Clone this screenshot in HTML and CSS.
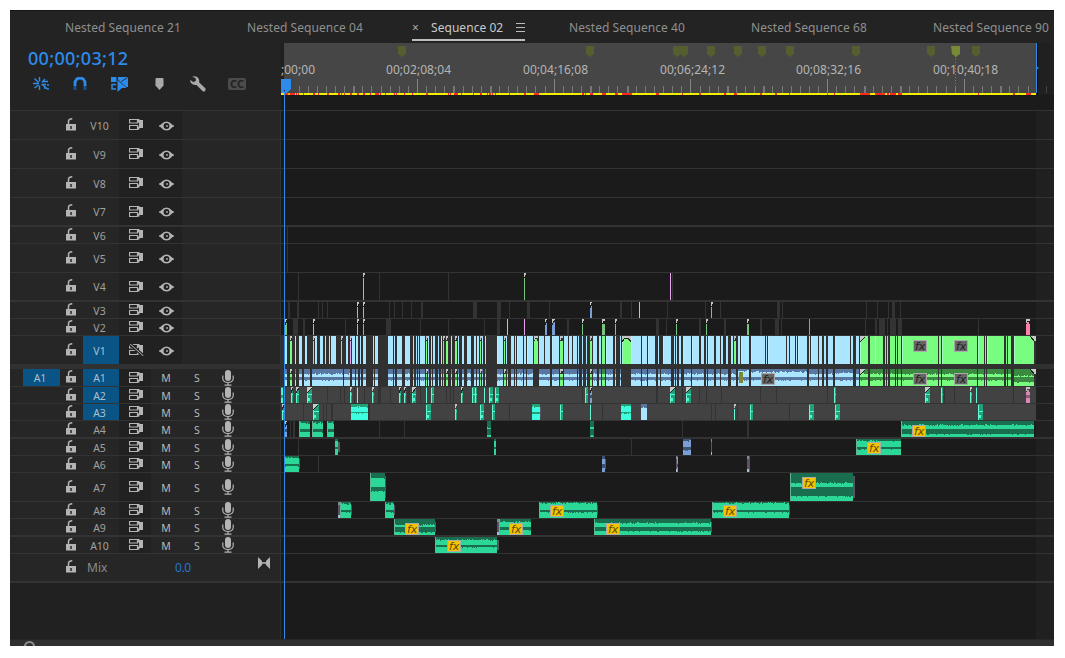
FILE: index.html
```html
<!DOCTYPE html>
<html lang="en">
<head>
<meta charset="utf-8">
<title>Timeline</title>
<link rel="stylesheet" href="styles.css">
</head>
<body>
<svg class="defs" width="0" height="0">
  <symbol id="i-lock" viewBox="0 0 10 13"><path d="M0 6h10v6.500H0z"/><path d="M2.500 6V3.500Q2.500 1 6.300 .8" fill="none" stroke="currentColor" stroke-width="1.500"/><path d="M4.300 8h1.500v3H4.300z" fill="#262626"/></symbol>
  <symbol id="i-sync" viewBox="0 0 15 12"><path d="M.5 .5h8v3.500h-8zM.5 6.500h8v4h-8z" fill="none" stroke="currentColor" stroke-width="1.200"/><path d="M9 0h1.500v1H14v8h-3.500v1.500H9V7.500h1V3.500H9z"/></symbol>
  <symbol id="i-syncoff" viewBox="0 0 15 12"><path d="M.5 .5h8v3.500h-8zM.5 6.500h8v4h-8z" fill="none" stroke="currentColor" stroke-width="1.200"/><path d="M9 0h1.500v1H14v8h-3.500v1.500H9V7.500h1V3.500H9z"/><path d="M0 -1l14.500 13" stroke="#252525" stroke-width="3.200"/><path d="M0 -1l14.500 13" stroke="currentColor" stroke-width="1"/></symbol>
  <symbol id="i-eye" viewBox="0 0 16 10"><path d="M0 4.500Q1.500 4.200 2.500 3Q4.500 .4 7.500 .4T12.500 3Q13.500 4.200 15 4.500v1Q13.500 5.800 12.500 7Q10.500 9.600 7.500 9.600T2.500 7Q1.500 5.800 0 5.500z"/><circle cx="7.500" cy="5" r="2.900" fill="#202020"/><circle cx="8" cy="5" r=".9"/></symbol>
  <symbol id="i-mic" viewBox="0 0 12 16"><rect x="3" y="0" width="6" height="11" rx="3"/><path d="M.8 5.500V9Q1.500 12.500 6 12.500T11.200 9V5.500M6 12.500V15M2.500 15.200h7" fill="none" stroke="currentColor" stroke-width="1.200"/></symbol>
  <symbol id="i-nest" viewBox="0 0 16 16"><path d="M0 7.500h6M1.500 2.500l4 4M6.500 1v4.500M1.500 12l4-3M6.500 9.500V14M9 6.500L12 3M10 5.500h5M8.500 8l6 5M10 8.500h3M14 9h2M11 12h2M14 13h2" stroke="currentColor" stroke-width="1.400" fill="none"/></symbol>
  <symbol id="i-magnet" viewBox="0 0 14 14"><path d="M2 9V6a5 5 0 0 1 10 0v3" stroke="currentColor" stroke-width="2.800" fill="none"/><path d="M.6 9h2.800v4H.6zM10.600 9h2.800v4h-2.800z" fill="#18558f"/></symbol>
  <symbol id="i-link" viewBox="0 0 17 15"><path d="M0 0h5.500v5H0zM7 0h10v10h-2L7 2.500z"/><path d="M6.500 3l9 8H11l-4.500 4z"/><path d="M5 7.500H1v4.500h4" stroke="currentColor" stroke-width="1.500" fill="none"/><path d="M10.500 4.500L16.500 .5" stroke="#232323" stroke-width=".9"/></symbol>
  <symbol id="i-marker" viewBox="0 0 9 12"><path d="M.5 1q0-1 1-1h6q1 0 1 1v6.500L4.500 12l-4-4.500z"/></symbol>
  <symbol id="i-wrench" viewBox="0 0 16 16"><path d="M2 .8Q7-1 9 3.500Q9.500 5 9 6.200l6.300 6Q16 14 14.800 15.200Q13.500 16 12.500 15L6.500 9Q3 9.500 1 7Q0 5.500 .3 4L3.500 6.300 6 4.500 5.500 2z"/></symbol>
  <symbol id="i-fit" viewBox="0 0 12 12"><path d="M0 0l4 4v4L0 12zM12 0L8 4v4L12 12z"/><path d="M3 6h6" stroke="currentColor" stroke-width="1.600"/></symbol>
</svg>
<main class="panel">
  <nav class="tabs">
    <a class="tab">Nested Sequence 21</a>
    <a class="tab">Nested Sequence 04</a>
    <a class="tab tab-active"><span class="tab-inner"><span class="tab-close">×</span><span class="tab-name">Sequence 02</span><span class="tab-menu"><i></i><i></i><i></i></span></span></a>
    <a class="tab">Nested Sequence 40</a>
    <a class="tab">Nested Sequence 68</a>
    <a class="tab tab-last">Nested Sequence 90</a>
  </nav>
  <section class="top">
    <div class="controls">
      <div class="timecode">00;00;03;12</div>
      <div class="tools">
        <svg class="tool blue" width="16" height="16"><use href="#i-nest"/></svg>
        <svg class="tool blue" width="14" height="14"><use href="#i-magnet"/></svg>
        <svg class="tool blue" width="17" height="15"><use href="#i-link"/></svg>
        <svg class="tool" width="9" height="12"><use href="#i-marker"/></svg>
        <svg class="tool" width="16" height="16"><use href="#i-wrench"/></svg>
        <span class="cc">CC</span>
      </div>
    </div>
    <svg class="ruler" id="ruler" width="773" height="67"></svg>
  </section>
  <section class="tracks" id="tracks"></section>
  <section class="rest"><div class="rest-head"></div><div class="rest-lane"></div></section>
  <footer class="scroll"><span class="knob"></span></footer>
  <div class="playline"></div>
</main>
<script src="timeline.js"></script>
</body>
</html>
```
FILE: styles.css
```css
* { box-sizing: border-box; }
body { margin: 0; padding: 10px; background: #fff; font-family: "Noto Sans", "Open Sans", sans-serif; }
svg { display: block; }
.defs { position: absolute; }
.panel { position: relative; width: 1044px; height: 636px; overflow: hidden; background: #232323; display: flex; flex-direction: column; border-top: 1px solid #151515; }
.tabs { height: 32px; flex: none; display: flex; padding-left: 55px; }
.tab { flex: none; width: 182px; font-size: 12px; line-height: 33px; letter-spacing: 0.05px; color: #8f8f8f; white-space: nowrap; }
.tab-last { width: auto; }
.tab-active { width: 157px; margin-left: -17px; color: #c9c9c9; }
.tab-inner { display: flex; width: 113px; height: 30px; padding-top: 5px; border-bottom: 2px solid #bdbdbd; align-items: center; }
.tab-close { width: 19px; font-size: 12px; line-height: 20px; color: #aaa; }
.tab-name { width: 85px; line-height: 22px; }
.tab-menu { width: 9px; display: flex; flex-direction: column; gap: 2px; padding-top: 1px; }
.tab-menu i { height: 1px; margin-bottom: 1px; background: #bbb; }
.top { height: 67px; flex: none; display: flex; }
.controls { width: 271px; border-right: 1px solid #222; }
.timecode { padding: 3px 0 0 18px; height: 29px; font-size: 18px; line-height: 25px; font-weight: 500; letter-spacing: 0.3px; color: #2d8ceb; }
.tools { height: 24px; display: flex; align-items: center; padding-left: 23px; color: #aaa; fill: currentColor; }
.tool { margin-right: 24px; flex: none; }
.tools .tool:nth-child(3) { margin-right: 27px; }
.tools .tool:nth-child(4) { margin-right: 26px; }
.tools .tool:nth-child(5) { margin-right: 22px; }
.blue { color: #2d8ceb; }
.cc { width: 18px; height: 12px; border-radius: 2px; background: #4b4b4b; color: #232323; font-size: 11px; font-weight: 700; line-height: 12px; text-align: center; }
.ruler { flex: none; }
.tracks { flex: none; border-top: 1px solid #333; }
.row { display: flex; background: #262626; border-bottom: 1px solid #333; box-sizing: content-box; }
.row-wide { border-bottom-width: 2px; }
.row-split { border-bottom: 5px solid #313131; }
.head { width: 270px; height: 100%; display: grid; grid-template-columns: 13px 37px 6px 17px 36px 32px 31px 31px 31px 36px; color: #b4b4b4; fill: currentColor; }
.cell { height: 100%; display: flex; align-items: center; justify-content: center; font-size: 11px; line-height: 14px; padding-top: 1px; }
.cell-lock { padding: 0; justify-content: flex-start; }
.cell-lock svg { transform: translateY(-1px); }
.cell-name { color: #a0a0a0; font-size: 10.500px; padding-right: 3px; }
.cell-on { background: #095385; color: #a9c0d0; }
.cell-dark { background: #212121; }
.cell-sync { justify-content: flex-start; padding: 0 0 0 10px; }
.cell-btn { font-size: 10.500px; color: #b8b8b8; padding-right: 1px; }
.cell-mic { padding: 0 1px 0 0; }
.mix-name { font-size: 12px; color: #8c8c8c; justify-content: flex-start; padding-left: 4px; }
.mix-val { grid-column: 7 / 9; font-size: 12px; letter-spacing: -0.4px; color: #2475d0; justify-content: flex-start; padding-left: 24px; }
.mix-fit { grid-column: 10; justify-content: flex-start; padding: 0 0 9px 14px; }
.sep { width: 1px; background: #333; }
.lane { flex: none; }
.fx { font: italic 500 11px "DejaVu Sans", sans-serif; }
.tc { font: 12px "Noto Sans", sans-serif; fill: #b5b5b5; }
.rest { flex: 1; display: flex; }
.rest-head { width: 271px; background: #212121; border-right: 1px solid #2e2e2e; }
.rest-lane { flex: 1; background: linear-gradient(to right, #1b1b1b 755px, #202020 755px); }
.scroll { height: 7px; flex: none; background: #2f2f2f; border-top: 1px solid #272727; overflow: hidden; padding: 1px 0 0 14px; }
.knob { display: block; width: 11px; height: 11px; border: 2px solid #8e8e8e; border-radius: 50%; }
.playline { position: absolute; left: 274px; top: 80px; width: 1px; height: 548px; background: #2d8ceb; }
```
FILE: timeline.js
```js
// Positions inside the clip strings are in thirds of a pixel, counted from
// the "@" origin (a panel-space x) that precedes them.
// Token: <colour><start>-<end>[:topGap,midGap][<|>|^]   fx badges: f<x>:<y>
const X0 = 281, END = 755;
const COL = {
  b: ['#aae6ff', '#5877a3'], g: ['#78fd80', '#3b8a42'], n: ['#79c47c', '#456d48'],
  v: ['#e9a6f0', '#8a5f90'], p: ['#f592ae', '#8b4b60'], k: ['#ff7faa', '#a94f71'],
  u: ['#7b9fd4', '#3d5373'], t: ['#3dffe0', '#24a076'], T: ['#3dffe0', '#24a076'],
  G: ['#2bd898', '#196e4f'], D: ['#2bd898', '#196e4f'], d: ['#333', '#333'],
  w: ['#5b5266', '#5b5266'], x: ['#5b5266', '#5b5266'], m: ['#d98ab4', '#8f5a76'], o: ['#7d8738', '#7d8738']
};
const V1R = '@865 g0-9 g15-27 g30-54 g60-63 g66-69 g75-90 g93-96 g99-108 g111-219 g222-228 g231-336 g339-357 g360-363 g366-417 g423-426 g429-438 g447-507> F144:4 F267:4';
const TRACKS = [
  { n: 'V10', h: 28 }, { n: 'V9', h: 28 }, { n: 'V8', h: 28 }, { n: 'V7', h: 27, w: 1 },
  { n: 'V6', h: 16, c: '@275 d36-39' }, { n: 'V5', h: 28, c: '@275 d36-39' },
  { n: 'V4', h: 27, w: 1, c: '@275 d69-72 p264-267^ d312-315 d519-522 @475 n147-150^ v585-588 d591-594' },
  { n: 'V3', h: 16, c: '@275 d39-45 d66-72 d129-132 d141-144 d156-159 p246-249^ p264-267^ d342-345 d357-360 d381-384 d408-411 d438-444 d594-600 @475 d0-6 d66-78 d102-105 d156-165 d222-225 u345-351< d435-441 d468-471 v492-495 d576-579 @675 d90-93 n108-111^ d135-138 d306-315 d321-324 d573-576 @865 d3-6 d36-39 d69-72 d81-90 d105-108' },
  { n: 'V2', h: 16, c: '@275 n30-36< d54-69 d84-90 p114-117^ d210-213 p246-249^ n264-267^ d333-348 d435-438 d519-522 @475 d27-30 d66-75 v96-99 v147-150 u210-216< u231-240< d276-282 n321-324^ n381-390^ n420-423^ d543-552 d573-576 @675 n3-6^ d72-78 n93-96^ d147-153 n216-222^ d255-261 d300-312 d318-321 u402-405 d570-573 @865 d0-3 d30-36 d42-60 d66-69 d75-93 d99-111 d339-342 k483-495^' },
  { n: 'V1', h: 28, on: 1, split: 1, bg: '#313131', c: '@275 b30-36 g45-51^ b60-63 b72-81 b90-96 g114-118^ b120-126 b135-144 b150-153 b162-165 b168-183 v198-201^ b213-219 v225-228^ b231-240 b243-249 b255-258 b264-273 b294-297 b300-309 b339-354 b357-360 b366-381 b390-405 b414-417 b423-426 b429-432 b435-450 g453-456^ b459-462 b468-471 b474-480 b489-492 b498-501 v504-507^ g513-519^ b528-531 g540-546^ b549-552 b561-567 b576-588 b597-600 @475 b0-3 b6-12 g15-18^ b21-24 b30-33 b66-84 g87-90^ b93-96 b108-117 b120-123 b126-144 b147-153 b156-174 g177-189^ b192-207 b210-225 b231-252 g255-264^ b267-279 b282-291 b294-306 b309-312 b321-324 b333-336 g345-351^ b354-366 b372-378 g381-390 b393-414 b420-423 b435-438 g441-468A b468-498 b501-516 b519-540 b549-552 b564-588 b597-600 @675 b3-6 b12-18 b24-48 b51-72 b78-87 b93-96 b99-117 b123-135 b138-144 b153-159 b168-174 g177-183^ b189-195 b198-222 b228-270 b273-276 b279-333 b336-342 b345-360 b363-366 b369-396 b402-405 b408-429 b432-441 b447-453 b459-474 b480-525 b528-534 b543-552 g555-579< g585-600 ' + V1R },
  { n: 'A1', h: 17, on: 1, src: 1, a: 1, bg: '#313131', c: '@275 b30-36 g45-51^ b60-63 b72-81 b87-105 b111-204 b207-225 b231-240 b243-249 b255-258 b264-273 b294-297 b300-309 b339-354 b357-360 b366-381 b390-405 b414-417 b423-426 b429-432 b435-450 g453-456^ b459-462 b468-471 b474-480 b489-492 b498-501 g504-507 g513-519^ b528-531 g540-546^ b549-552 b561-567 b576-588 b597-600 @475 b0-3 b6-12 g15-18^ b21-24 b30-33 b66-84 g87-93^ b96-99 b108-117 b120-123 b126-144 b147-153 b156-174 b192-225 b231-252 g255-264^ b267-306 b309-312 b321-324 b333-336 g345-351^ b354-366 b372-378 g381-390 b393-414 b420-423 b435-438 d441-468 b468-498 b501-516 b519-543 b549-555 b558-588 b597-600 @675 b3-6 b12-18 b27-48 b51-87 b93-96 b99-117 b123-135 b138-159 b168-183 b189-222:2,3 o192-204:4,0 b228-396:3,3 b402-429 b432-441 b447-453 b459-474 b480-534:4,3 b543-552 g555-579< g585-600 F258:4 ' + V1R.replace(/447-507/, '447-507:7,5') },
  { n: 'A2', h: 16, on: 1, a: 1, bg: '#424242', c: '@275 T18-24 t48-54< t63-72< t96-111< d156-159 d195-198 d207-210 t225-231^ d237-240 t246-249 d267-270 t291-297^ d309-318 d345-348 t372-378< t387-393< d396-405 t411-423< d435-438 t453-456 t468-477 d513-516 d525-528 d534-537 t558-564< t591-600 @475 t0-6 t27-30 t42-54 t60-72 d321-324 t330-339 u345-351< d543-549 t585-600< @675 d0-3 d21-24 t33-48< d72-75 d93-96 d138-141 d255-258 d303-306 d456-459 t477-483 @865 t180-195< t228-234 d237-240 d267-270 t315-321^ t333-336 d444-447 m483-495^' },
  { n: 'A3', h: 16, on: 1, a: 1, bg: '#424242', c: '@275 t21-27< d84-87 t114-132< d144-147 d153-156 d168-174 T228-279:3,1 d279-285 t453-468 t540-546^ @475 t15-27 t51-60 d102-105 T171-195:3,2 w195-198 t255-264 t345-348 d381-384 T438-468:2,1 b498-516:4,0 @675 d108-111 d120-123 t177-180^ d186-189 t225-234 d342-345 t402-417 t480-495 @865 t339-354' },
  { n: 'A4', h: 16, w: 1, a: 1, c: '@275 u30-36< d45-48 d54-60 G72-105:2,3 G111-144:2,3 G156-177:2,3 d312-315 d387-390 D636-648:6,6 D945-957:6,6 @590 d276-279 d471-477 G933-1332:4,5 f966:4' },
  { n: 'A5', h: 16, a: 1, c: '@275 d69-72 G180-189:2,2 w189-195 G657-663:2,2 @590 d123-126 u279-303:2,3 x363-366 G798-933:2,2 f831:3' },
  { n: 'A6', h: 16, a: 1, c: '@275 G27-72:2,2 w72-75 d129-132 @590 u36-45:3,4 w45-48 x258-261 u261-264 x471-480' },
  { n: 'A7', h: 28, a: 1, c: '@275 G285-330:5,4 w330-333 @590 G600-789:10,9 w789-795 f636:4' },
  { n: 'A8', h: 16, a: 1, c: '@275 x189-195 G195-228:2,2 w228-231 G330-357:2,2 w357-360 G792-966:1,2 w966-969 @590 G366-597:1,2 w597-600 f399:3 @275 f825:3' },
  { n: 'A9', h: 16, w: 1, a: 1, c: '@275 G357-480:6,5 w480-483 x666-672 G672-768:3,3 f390:4 f702:4 @590 G12-363:4,4 w363-366 f48:4' },
  { n: 'A10', h: 16, a: 1, c: '@275 G480-666:3,2 w666-672 f516:3' },
  { n: 'Mix', h: 27, w: 1, mix: 1 }
];

const rect = (x, y, w, h, f) => `<rect x="${x}" y="${y}" width="${w}" height="${h}" fill="${f}"/>`;
const noise = i => { const s = Math.sin(i * 12.9898) * 43758.5453; return s - Math.floor(s); };

function wave(x, w, h, [light, dark], top, mid) {
  let s = rect(x, 0, w, h, dark), up = '', lo = '';
  const half = Math.floor(h / 2);
  for (let i = 0; i < w; i++) {
    const n = w > 3 && i ? noise(x * 3 + i) : .5;
    const j = n > .85 ? 1 : n < .15 ? -1 : 0;
    const a = Math.max(0, top - j), b = Math.min(h, half + mid + (noise(x + i * 7) > .82 && w > 3 ? 1 : 0));
    up += `M${x + i} ${a}h1V${half}h-1z`;
    lo += `M${x + i} ${b}h1V${h}h-1z`;
  }
  return s + `<path d="${up}${lo}" fill="${light}"/>`;
}

function badge(x, y, on) {
  return rect(x, y, 14, 12, '#aaaaa6') + rect(x + 1, y + 1, 12, 10, on ? '#f5c400' : '#666') +
    `<text class="fx" x="${x + 2}" y="${y + 10}" fill="${on ? '#5c4a08' : '#222'}">fx</text>`;
}

function drawClips(t) {
  let org = 0, out = '', over = '';
  for (const k of (t.c || '').split(' ')) {
    if (!k) continue;
    if (k[0] === '@') { org = +k.slice(1) - X0; continue; }
    const f = k.match(/^([fF])(\d+):(\d+)/);
    if (f) { over += badge(Math.round(org + f[2] / 3), +f[3], f[1] === 'f'); continue; }
    const m = k.match(/^(\w)(\d+)-(\d+)(?::(\d+),(\d+))?([<>^A])?/);
    const x = Math.round(org + m[2] / 3), w = Math.max(1, Math.round((m[3] - m[2]) / 3)), c = m[1];
    const pair = COL[c];
    if ('dwox'.includes(c)) {
      const inset = c === 'w' ? 3 : c === 'o' ? 3 : 0;
      out += rect(x, inset, w, t.h - inset * 2, pair[0]);
      if (c === 'x') out += rect(x, 0, Math.min(w, 2), 3, '#7c8892') + rect(x, t.h - 3, Math.min(w, 2), 3, '#a8bcd8');
    } else if (!t.a) {
      out += rect(x, 0, w, t.h, pair[0]);
      if (w > 5 && 'bg'.includes(c)) out += `<rect x="${x}" y="0" width="1" height="${t.h}" fill="#c8f0ff" opacity=".6"/>`;
    } else if (c === 't') {
      out += rect(x, 0, w, t.h, '#24a076') + rect(x, 1, 1, t.h - 1, '#6cf5d2') + rect(x, 7, w, 1, '#3dffe0');
      if (w > 3) out += rect(x + 1, 11, 2, 3, '#3dffe0');
    } else {
      out += wave(x, w, t.h, pair, m[4] ? +m[4] : c === 'm' ? 2 : t.h === 17 ? 5 : 1, m[5] ? +m[5] : 3);
      if (c === 'G' && w > 3) out += rect(x, 0, 1, t.h, '#66b393');
    }
    const gap = t.bg || '#1b1b1b';
    if (m[6] === '<') out += `<path d="M${x} 0h${Math.min(w, 5)}L${x} 6z" fill="#c8c8c8"/><path d="M${x} 6L${x + Math.min(w, 5)} 1" stroke="#222"/>`;
    if (m[6] === '>') out += `<path d="M${x + w - 4} 0h6v5h-2z" fill="#c8c8c8"/><path d="M${x + w - 4} 0l5 6" stroke="#222"/>`;
    if (m[6] === '^') out += rect(x, 0, w, 5, gap) + rect(x, 0, Math.max(2, w), 2, '#c4c4c4') + rect(x, 2, 1, 2, '#c4c4c4') + (w > 3 ? rect(x + 1, 3, w - 2, 2, pair[0]) : '');
    if (m[6] === 'A') out += `<path d="M${x} 0h${w}v6l-3-4H${x + 3}l-3 4z" fill="#c4c4c4"/><path d="M${x} 6l3-4h3l3 4" fill="none" stroke="#222"/>`;
  }
  return out + over;
}

const icon = (id, w, h) => `<svg width="${w}" height="${h}"><use href="#i-${id}"/></svg>`;

function head(t) {
  const lock = `<div class="cell cell-lock">${icon('lock', 10, 13)}</div>`;
  if (t.mix) return `<div class="head"><div></div><div></div><div></div>${lock}<div class="cell mix-name">Mix</div><div></div><div class="cell mix-val">0.0</div><div class="cell mix-fit">${icon('fit', 12, 12)}</div></div>`;
  const src = t.src ? '<div class="cell cell-name cell-on">A1</div>' : '<div></div>';
  const name = `<div class="cell cell-name${t.on ? ' cell-on' : ''}">${t.n}</div>`;
  const sync = `<div class="cell cell-dark cell-sync">${icon(t.n === 'V1' ? 'syncoff' : 'sync', 15, 12)}</div>`;
  const rest = t.a
    ? `<div class="cell cell-btn">M</div><div class="cell cell-btn">S</div><div class="cell cell-mic">${icon('mic', 12, 16)}</div>`
    : `<div class="cell cell-dark">${icon('eye', 16, 10)}</div>`;
  return `<div class="head"><div></div>${src}<div></div>${lock}${name}${sync}${rest}</div>`;
}

document.getElementById('tracks').innerHTML = TRACKS.map(t =>
  `<div class="row${t.w ? ' row-wide' : ''}${t.split ? ' row-split' : ''}" style="height:${t.h}px">${head(t)}<div class="sep"></div>` +
  `<svg class="lane" width="773" height="${t.h}" shape-rendering="crispEdges">${rect(0, 0, 773, t.h, '#202020')}${rect(0, 0, END, t.h, t.bg || '#1b1b1b')}${drawClips(t)}</svg></div>`
).join('');

// Time ruler
const RED = [[275, '28-40 44-60 63-66 69-72 84-87 114-120 129-132 156-162 189-195 198-201 207-210 225-231 246-252 264-270 285-288 300-312 315-318 330-333 357-360 363-366 387-390 411-414 453-459 519-522 525-528 537-549 558-561 594-597 615-621 636-639 642-648 651-654 660-663 702-705 747-753 777-792 921-927 930-933 945-954 981-993 1020-1029 1041-1071 1143-1152'],
  [665, '51-54 102-108 177-183 207-216 285-291 330-336 372-375 486-489 507-510 585-615 630-660 666-672 675-693 699-711 939-942 1044-1050 1083-1098']];
const THICK = new Set([8, 19, 23, 34, 38, 49, 53, 64, 68, 79]);
let r = rect(0, 0, 773, 52, '#202020') + rect(0, 52, 773, 15, '#1b1b1b') + rect(3, 0, 752, 50, '#464646');
for (let i = 0; i < 85; i++) {
  const x = Math.round(136 + (i - 15) * 9.113), major = i > 0 && i % 15 === 0;
  if (x < 12) continue;
  r += major ? rect(x, 36, 1, 14, '#858585') : rect(x, 43, THICK.has(i) ? 2 : 1, 7, x > END ? '#444' : '#777');
}
[['00;02;08;04', 386], ['00;04;16;08', 523], ['00;06;24;12', 660], ['00;08;32;16', 796], ['00;10;40;18', 933]].forEach(([s, x]) => {
  r += `<text class="tc" x="${x - X0}" y="31" textLength="65">${s}</text>`;
});
r += '<text class="tc" x="0" y="31" textLength="34">;00;00</text>';
[398, 586, 673, 679, 707, 734, 758, 786, 852, 927, 951, 972].forEach(x => {
  const on = x === 951, w = on || x === 679 ? 9 : 8, a = x - X0;
  r += `<path d="M${a} 3h${w}v8l-3 2-1 2-1-2-3-2z" fill="${on ? '#778b37' : '#545e2e'}"/>`;
  if (on) r += `<path d="M${a + 4.5} 16v34" stroke="#778b37" stroke-dasharray="1 2"/>`;
});
r += rect(0, 50, END, 2, '#f4ee00');
RED.forEach(([o, s]) => s.split(' ').forEach(p => {
  const [a, b] = p.split('-');
  r += rect(o - X0 + a / 3, 50, (b - a) / 3, 2, '#ff2a1c');
}));
r += rect(END, 0, 1, 50, '#2d8ceb') + rect(END + 1, 0, 1, 52, '#080808') + `<path d="M${END} 23l3 2-3 2z" fill="#2d8ceb"/>`;
r += '<path d="M0 36h10v10l-4 4H0z" fill="#2d8ceb"/>' + rect(3, 47, 1, 5, '#111');
document.getElementById('ruler').innerHTML = r;
```
